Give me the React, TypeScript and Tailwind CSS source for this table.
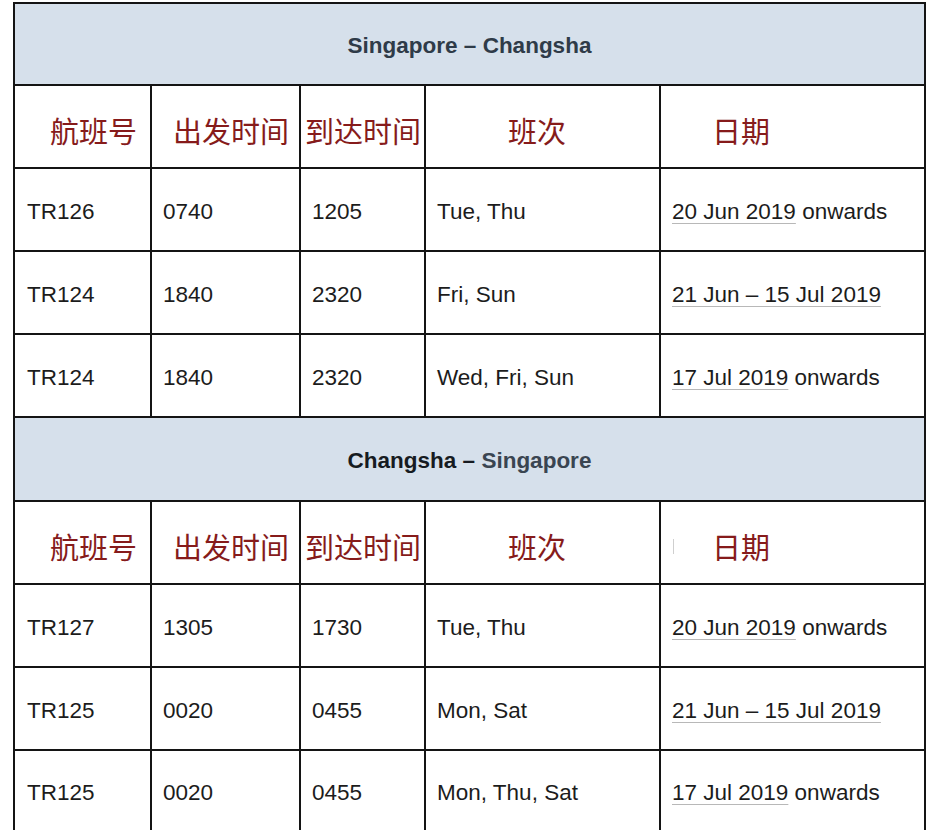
import React from 'react';

type Flight = {
  no: string;
  dep: string;
  arr: string;
  days: string;
  date: React.ReactNode;
};

const cols = 'grid grid-cols-[137px_149px_125px_235px_263px]';
const cell = 'border-r-2 border-[#141414] flex items-center';

const u = 'underline decoration-[#b8b8b8] decoration-1 underline-offset-[4px]';

const outbound: Flight[] = [
  { no: 'TR126', dep: '0740', arr: '1205', days: 'Tue, Thu', date: <span><span className={u}>20 Jun 2019</span> onwards</span> },
  { no: 'TR124', dep: '1840', arr: '2320', days: 'Fri, Sun', date: <span className={u}>21 Jun – 15 Jul 2019</span> },
  { no: 'TR124', dep: '1840', arr: '2320', days: 'Wed, Fri, Sun', date: <span><span className={u}>17 Jul 2019</span> onwards</span> },
];

const inbound: Flight[] = [
  { no: 'TR127', dep: '1305', arr: '1730', days: 'Tue, Thu', date: <span><span className={u}>20 Jun 2019</span> onwards</span> },
  { no: 'TR125', dep: '0020', arr: '0455', days: 'Mon, Sat', date: <span className={u}>21 Jun – 15 Jul 2019</span> },
  { no: 'TR125', dep: '0020', arr: '0455', days: 'Mon, Thu, Sat', date: <span><span className={u}>17 Jul 2019</span> onwards</span> },
];

const SectionTitle = ({ children, h }: { children: React.ReactNode; h: string }) => (
  <div className={`${h} bg-[#d6e0eb] border-b-2 border-[#141414] flex items-center justify-center pt-1 text-[22.5px] font-bold`}>
    {children}
  </div>
);

const ColumnHeads = ({ tick }: { tick?: boolean }) => (
  <div className={`${cols} h-[83px] border-b-2 border-[#141414] text-[29px] text-[#861b1b] font-['Noto_Sans_CJK_SC',sans-serif]`}>
    <div className={`${cell} pl-[35px] pt-2`}>航班号</div>
    <div className={`${cell} pl-[21px] pt-2`}>出发时间</div>
    <div className={`${cell} pl-[4px] pt-2`}>到达时间</div>
    <div className={`${cell} pl-[82px] pt-2`}>班次</div>
    <div className="flex items-center pt-2 pl-[51px]">
      {tick && <span className="inline-block w-px h-[15px] bg-[#cfcfcf] -ml-[39px] mr-[38px]" />}
      日期
    </div>
  </div>
);

const Row = ({ f, last }: { f: Flight; last?: boolean }) => (
  <div className={`${cols} ${last ? 'h-[79px]' : 'h-[83px] border-b-2 border-[#141414]'} text-[22.5px] text-[#1c1c1c]`}>
    <div className={`${cell} pl-[12px] pt-1`}>{f.no}</div>
    <div className={`${cell} pl-[11px] pt-1`}>{f.dep}</div>
    <div className={`${cell} pl-[11px] pt-1`}>{f.arr}</div>
    <div className={`${cell} pl-[11px] pt-1`}>{f.days}</div>
    <div className="flex items-center pl-[11px] pt-1">{f.date}</div>
  </div>
);

export default function App() {
  return (
    <div className="w-[938px] h-[839px] bg-white overflow-hidden font-['Liberation_Sans',Arial,sans-serif]">
      <div className="ml-[13px] mt-[2px] w-[913px] border-l-2 border-r-2 border-t-2 border-[#141414]">
        <SectionTitle h="h-[82px]">
          <span className="text-[#2f3b48]">Singapore – Changsha</span>
        </SectionTitle>
        <ColumnHeads />
        {outbound.map((f, i) => (
          <Row key={i} f={f} />
        ))}
        <SectionTitle h="h-[84px]">
          <span className="text-[#161b21]">Changsha –&nbsp;</span>
          <span className="text-[#3a4551]">Singapore</span>
        </SectionTitle>
        <ColumnHeads tick />
        {inbound.map((f, i) => (
          <Row key={i} f={f} last={i === inbound.length - 1} />
        ))}
      </div>
    </div>
  );
}
